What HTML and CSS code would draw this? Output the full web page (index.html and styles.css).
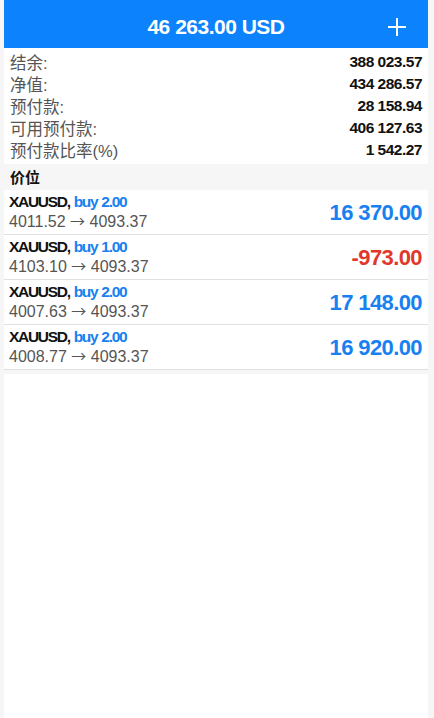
FILE: index.html
```html
<!DOCTYPE html>
<html lang="zh">
<head>
    <meta charset="UTF-8">
    <meta name="viewport" content="width=device-width, initial-scale=1.0">
    <title>交易</title>
    <link rel="stylesheet" href="styles.css">
</head>
<body>
    <header class="top-bar">
        <span class="top-title">46 263.00 USD</span>
        <svg class="add-icon" width="20" height="20" viewBox="0 0 20 20">
            <path d="M10 1 V19 M1 10 H19" stroke="#fff" stroke-width="2" fill="none"/>
        </svg>
    </header>

    <!-- Сводка по счёту -->
    <section class="summary">
        <div class="summary-row"><span class="label">结余:</span><span class="value">388 023.57</span></div>
        <div class="summary-row"><span class="label">净值:</span><span class="value">434 286.57</span></div>
        <div class="summary-row"><span class="label">预付款:</span><span class="value">28 158.94</span></div>
        <div class="summary-row"><span class="label">可用预付款:</span><span class="value">406 127.63</span></div>
        <div class="summary-row"><span class="label">预付款比率(%)</span><span class="value">1 542.27</span></div>
    </section>

    <div class="section-title">价位</div>

    <!-- Открытые позиции -->
    <ul class="positions">
        <li class="position">
            <div class="pos-info">
                <div class="pos-name">XAUUSD, <span class="pos-type">buy 2.00</span></div>
                <div class="pos-prices">4011.52 <span class="arrow">→</span> 4093.37</div>
            </div>
            <div class="pos-profit">16 370.00</div>
        </li>
        <li class="position">
            <div class="pos-info">
                <div class="pos-name">XAUUSD, <span class="pos-type">buy 1.00</span></div>
                <div class="pos-prices">4103.10 <span class="arrow">→</span> 4093.37</div>
            </div>
            <div class="pos-profit loss">-973.00</div>
        </li>
        <li class="position">
            <div class="pos-info">
                <div class="pos-name">XAUUSD, <span class="pos-type">buy 2.00</span></div>
                <div class="pos-prices">4007.63 <span class="arrow">→</span> 4093.37</div>
            </div>
            <div class="pos-profit">17 148.00</div>
        </li>
        <li class="position">
            <div class="pos-info">
                <div class="pos-name">XAUUSD, <span class="pos-type">buy 2.00</span></div>
                <div class="pos-prices">4008.77 <span class="arrow">→</span> 4093.37</div>
            </div>
            <div class="pos-profit">16 920.00</div>
        </li>
    </ul>

    <div class="empty-area"></div>
</body>
</html>
```

FILE: styles.css
```css
/* Общие стили */
body {
    margin: 0;
    padding: 0 6px 0 4px;
    background-color: #f6f6f6;
    font-family: "Liberation Sans", "Noto Sans CJK SC", sans-serif;
    height: 718px;
    display: flex;
    flex-direction: column;
    box-sizing: border-box;
}

/* Верхняя панель */
.top-bar {
    height: 48px;
    background-color: #0c82fc;
    color: white;
    display: flex;
    align-items: center;
    justify-content: center;
    position: relative;
}

.top-title {
    font-size: 21px;
    font-weight: bold;
    letter-spacing: -0.5px;
    padding-top: 5px;
}

.add-icon {
    position: absolute;
    right: 21px;
    top: 17px;
}

/* Сводка */
.summary {
    background-color: white;
    padding: 3px 6px 3px 6px;
}

.summary-row {
    height: 22px;
    display: flex;
    justify-content: space-between;
    align-items: center;
}

.label {
    font-size: 16.5px;
    color: #555;
}

.value {
    font-size: 15.5px;
    font-weight: bold;
    color: #111;
    letter-spacing: -0.5px;
}

.section-title {
    height: 26px;
    line-height: 27px;
    padding-left: 6px;
    font-size: 15px;
    font-weight: bold;
    color: #111;
}

/* Позиции */
.positions {
    list-style: none;
    margin: 0;
    padding: 0;
    background-color: white;
}

.position {
    height: 44px;
    border-bottom: 1px solid #e0e0e0;
    display: flex;
    justify-content: space-between;
    align-items: center;
    padding: 0 6px 0 5px;
}

.pos-name {
    font-size: 15.5px;
    font-weight: bold;
    color: #111;
    letter-spacing: -1.3px;
    word-spacing: 1px;
    line-height: 18px;
}

.pos-type {
    color: #1880f0;
}

.pos-prices {
    font-size: 16px;
    color: #555;
    line-height: 20px;
}

.arrow {
    font-family: "Noto Sans CJK SC", sans-serif;
    font-size: 15px;
}

.pos-profit {
    font-size: 22px;
    font-weight: bold;
    color: #1880f0;
    letter-spacing: -0.6px;
    padding-top: 2px;
}

.pos-profit.loss {
    color: #e0382c;
}

.empty-area {
    flex: 1;
    margin-top: 4px;
    background-color: white;
}
```
